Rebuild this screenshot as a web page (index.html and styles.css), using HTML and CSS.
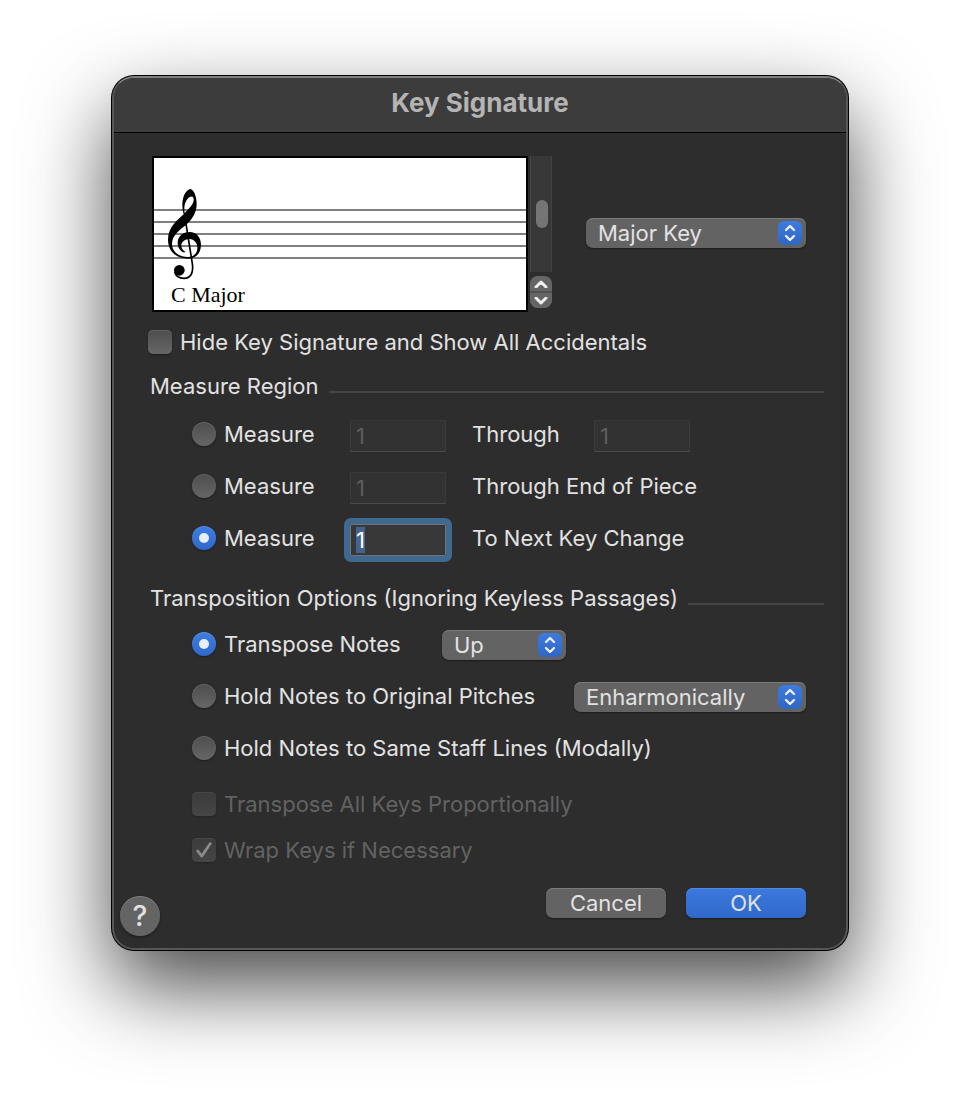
FILE: index.html
```
<!DOCTYPE html>
<html lang="en">
<head>
    <meta charset="UTF-8">
    <meta name="viewport" content="width=device-width, initial-scale=1.0">
    <title>Key Signature</title>
    <link rel="stylesheet" href="styles.css">
</head>
<body>
    <form class="dialog">
        <header class="dialog_title">
            <h1>Key Signature</h1>
        </header>

        <div class="preview">
            <svg class="preview_staff" width="376" height="156" viewBox="0 0 372 152" role="img" aria-label="Treble clef, C Major">
                <path d="M0 52H372M0 64H372M0 76H372M0 88H372M0 100H372" stroke="#7f7f7f" stroke-width="2"/>
                <!-- treble clef -->
                <g transform="scale(.3333) translate(-42 -39)">
                    <path fill-rule="evenodd" d="M152 132C162 136 170 154 170 176C170 202 157 222 140 238C119 256 96 270 96 298C97 322 118 336 144 336C149 336 154 335 158 333C168 328 173 318 172 306C171 292 162 283 149 282C133 282 123 292 124 303C125 312 130 317 135 319L133 323C121 319 113 308 113 294C113 275 128 261 149 261C169 261 183 277 183 299C183 325 167 341 144 341C110 341 84 320 84 284C84 246 112 226 131 208C124 184 126 156 138 141C143 135 148 132 152 132ZM134 204C153 187 162 174 161 162C160 154 154 153 148 157C135 166 131 186 134 204Z"/>
                    <path d="M137 230L157 356C161 384 152 400 132 400C118 400 107 393 104 381" fill="none" stroke="#000" stroke-width="5"/>
                    <circle cx="118" cy="376" r="16"/>
                </g>
                <text class="preview_key" x="17" y="144">C Major</text>
            </svg>
            <div class="scroller">
                <div class="scroller_track"><div class="scroller_thumb"></div></div>
                <div class="stepper">
                    <button type="button" aria-label="Previous key"><svg width="14" height="8" viewBox="0 0 14 8"><path d="M2 7L7 2L12 7"/></svg></button>
                    <button type="button" aria-label="Next key"><svg width="14" height="8" viewBox="0 0 14 8"><path d="M2 1L7 6L12 1"/></svg></button>
                </div>
            </div>
            <span class="popup popup--key">
                <select aria-label="Key type"><option>Major Key</option><option>Minor Key</option></select>
                <span class="popup_arrows"><svg width="24" height="24" viewBox="0 0 24 24"><path d="M8 9L12 5L16 9M8 15L12 19L16 15"/></svg></span>
            </span>
        </div>

        <label class="choice choice--hide"><input type="checkbox">Hide Key Signature and Show All Accidentals</label>

        <h2 class="section_title">Measure Region</h2>
        <div class="region">
            <label class="choice"><input type="radio" name="region">Measure</label>
            <input class="field" type="text" value="1" aria-label="First measure" disabled>
            <label for="lastMeasure">Through</label>
            <input class="field" id="lastMeasure" type="text" value="1" disabled>

            <label class="choice"><input type="radio" name="region">Measure</label>
            <input class="field" id="toEnd" type="text" value="1" disabled>
            <label class="region_wide" for="toEnd">Through End of Piece</label>

            <label class="choice"><input type="radio" name="region" checked>Measure</label>
            <input class="field" id="toNext" type="text" value="1">
            <label class="region_wide" for="toNext">To Next Key Change</label>
        </div>

        <h2 class="section_title section_title--options">Transposition Options (Ignoring Keyless Passages)</h2>
        <div class="options">
            <div class="options_row">
                <label class="choice"><input type="radio" name="transpose" checked>Transpose Notes</label>
                <span class="popup popup--direction">
                    <select aria-label="Direction"><option>Up</option><option>Down</option></select>
                    <span class="popup_arrows"><svg width="24" height="24" viewBox="0 0 24 24"><path d="M8 9L12 5L16 9M8 15L12 19L16 15"/></svg></span>
                </span>
            </div>
            <div class="options_row options_row--spread">
                <label class="choice"><input type="radio" name="transpose">Hold Notes to Original Pitches</label>
                <span class="popup popup--pitches">
                    <select aria-label="Original pitches"><option>Enharmonically</option><option>Chromatically</option></select>
                    <span class="popup_arrows"><svg width="24" height="24" viewBox="0 0 24 24"><path d="M8 9L12 5L16 9M8 15L12 19L16 15"/></svg></span>
                </span>
            </div>
            <div class="options_row">
                <label class="choice"><input type="radio" name="transpose">Hold Notes to Same Staff Lines (Modally)</label>
            </div>
        </div>

        <div class="extras">
            <label class="choice choice--disabled"><input type="checkbox" disabled>Transpose All Keys Proportionally</label>
            <label class="choice choice--disabled"><input type="checkbox" checked disabled>Wrap Keys if Necessary</label>
        </div>

        <footer class="dialog_footer">
            <button class="help" type="button" aria-label="Help">?</button>
            <button class="btn" type="button">Cancel</button>
            <button class="btn btn--default" type="submit">OK</button>
        </footer>
    </form>

    <script>
        // start with the active measure number selected
        const toNext = document.getElementById('toNext');
        toNext.focus();
        toNext.select();
    </script>
</body>
</html>
```
FILE: styles.css
```
*{
    box-sizing: border-box;
    margin: 0;
    padding: 0;
}

body{
    background-color: #fff;
    padding: 76px 24px 148px;
    font-family: Inter, "Liberation Sans", sans-serif;
    font-size: 22px;
    line-height: 28px;
    color: #e2e2e2;
}

button, input, select{
    font: inherit;
    color: inherit;
    border: none;
    outline: none;
}

.dialog{
    max-width: 736px;
    margin: 0 auto;
    background-color: #2d2d2d;
    border: 2px solid #575757;
    border-top-color: #7f7f7f;
    border-radius: 22px;
    box-shadow: 0 0 0 1px #000, 0 36px 84px rgba(0,0,0,.72);
}

.dialog_title{
    padding: 11px 0 15px;
    text-align: center;
    background-color: #3c3c3c;
    border-bottom: 1px solid #000;
    border-radius: 20px 20px 0 0;
}

.dialog_title h1{
    font-size: 26px;
    line-height: 28px;
    font-weight: 700;
    color: #b4b4b4;
}

/* staff preview */
.preview{
    display: flex;
    padding: 23px 40px 0 38px;
}

.preview_staff{
    flex: none;
    background-color: #fff;
    border: 2px solid #000;
}

.preview_key{
    font-family: "Liberation Serif", serif;
    font-size: 22px;
}

.scroller{
    display: flex;
    flex-direction: column;
    gap: 4px;
    width: 22px;
    margin: 0 34px 0 2px;
}

.scroller_track{
    height: 116px;
    padding: 44px 3px 0 5px;
    background-color: #383838;
    border-left: 1px solid #484848;
    border-right: 1px solid #424242;
}

.scroller_thumb{
    width: 12px;
    height: 28px;
    border-radius: 6px;
    background-color: #757575;
}

.stepper{
    display: flex;
    flex-direction: column;
    gap: 2px;
    height: 32px;
    border-radius: 8px;
    overflow: hidden;
    background-color: #515151;
}

.stepper button{
    flex: 1;
    display: flex;
    align-items: center;
    justify-content: center;
    background-color: #656565;
}

.stepper path,
.popup_arrows path{
    fill: none;
    stroke: #efefef;
    stroke-width: 3;
    stroke-linecap: round;
    stroke-linejoin: round;
}

/* popup menus */
.popup{
    position: relative;
    height: 30px;
}

.popup select{
    appearance: none;
    display: block;
    width: 100%;
    height: 30px;
    padding: 0 36px 0 12px;
    border-radius: 7px;
    background-color: #636363;
    box-shadow: inset 0 1px #7b7b7b, 0 1px 2px rgba(0,0,0,.4);
}

.popup_arrows{
    position: absolute;
    top: 3px;
    right: 4px;
    width: 24px;
    height: 24px;
    border-radius: 6px;
    background: linear-gradient(#3d7be0, #2f66c6);
    pointer-events: none;
}

.popup_arrows svg{
    display: block;
}

.popup_arrows path{
    stroke-width: 2.4;
}

.popup--key{
    flex: 0 1 220px;
    margin-top: 62px;
}

.popup--direction{
    width: 124px;
}

.popup--pitches{
    width: 232px;
}

/* check boxes and radio buttons */
.choice{
    display: flex;
    align-items: center;
    gap: 8px;
    white-space: nowrap;
}

.choice input{
    appearance: none;
    flex: none;
    display: flex;
    align-items: center;
    justify-content: center;
    width: 24px;
    height: 24px;
    border-radius: 5px;
    background: linear-gradient(#4e4e4e, #666);
    box-shadow: inset 0 1px rgba(255,255,255,.12), 0 1px 2px rgba(0,0,0,.4);
}

.choice input[type="radio"]{
    border-radius: 50%;
}

.choice input[type="radio"]:checked{
    background: linear-gradient(#3f7de2, #2f68ca);
}

.choice input[type="radio"]:checked::after{
    content: "";
    width: 10px;
    height: 10px;
    border-radius: 50%;
    background-color: #e6eefb;
}

.choice input:disabled{
    background: linear-gradient(#3b3b3b, #464646);
    box-shadow: inset 0 1px rgba(255,255,255,.06), 0 1px 2px rgba(0,0,0,.2);
}

.choice input[type="checkbox"]:checked::after{
    content: "";
    width: 16px;
    height: 16px;
    background-color: #8b8b8b;
    clip-path: polygon(0 56%, 12% 46%, 35% 74%, 86% 0, 100% 8%, 42% 95%, 30% 95%);
}

.choice--disabled{
    color: #626262;
}

.choice--hide{
    margin: 16px 22px 0 34px;
}

/* measure region */
.section_title{
    display: flex;
    align-items: flex-end;
    gap: 10px;
    margin: 16px 22px 20px 36px;
    font-size: 22px;
    font-weight: 400;
    white-space: nowrap;
}

.section_title::after{
    content: "";
    flex: 1;
    height: 2px;
    margin-bottom: 7px;
    background-color: #444;
}

.section_title--options{
    margin-top: 28px;
    margin-bottom: 18px;
}

.region{
    display: grid;
    grid-template-columns: 158px 122px 122px 1fr;
    row-gap: 20px;
    align-items: start;
    padding: 0 22px 0 78px;
}

.region_wide{
    grid-column: span 2;
}

.field{
    width: 96px;
    height: 32px;
    padding: 0 5px;
    line-height: 28px;
    background-color: #383838;
    border: 1px solid #6f747a;
}

.field:disabled{
    color: #5e5e5e;
    background-color: #323232;
    border-color: #393939;
    border-bottom-color: #4a4a4a;
}

.field:focus{
    color: #fff;
    outline: 6px solid #40698f;
    border-radius: 1px;
}

.field::selection{
    color: #fff;
    background-color: #47628f;
}

/* transposition options */
.options{
    display: flex;
    flex-direction: column;
    gap: 20px;
    padding: 0 40px 0 78px;
}

.options_row{
    display: flex;
    align-items: flex-start;
    height: 32px;
}

.options_row .choice{
    min-width: 250px;
}

.options_row--spread{
    justify-content: space-between;
}

.extras{
    display: flex;
    flex-direction: column;
    gap: 18px;
    padding: 24px 40px 0 78px;
}

/* buttons */
.dialog_footer{
    display: flex;
    align-items: flex-start;
    gap: 20px;
    padding: 24px 40px 12px 6px;
}

.help{
    width: 40px;
    height: 40px;
    margin: 8px auto 0 0;
    border-radius: 50%;
    font-size: 28px;
    font-weight: 500;
    background-color: #646464;
    box-shadow: inset 0 1px #7b7b7b, 0 1px 3px rgba(0,0,0,.4);
}

.btn{
    width: 120px;
    height: 30px;
    border-radius: 7px;
    background-color: #636363;
    box-shadow: inset 0 1px #7b7b7b, 0 1px 2px rgba(0,0,0,.4);
}

.btn--default{
    background: linear-gradient(#3c79de, #3069cb);
    box-shadow: inset 0 1px #5188e4, 0 1px 2px rgba(0,0,0,.4);
}
```
